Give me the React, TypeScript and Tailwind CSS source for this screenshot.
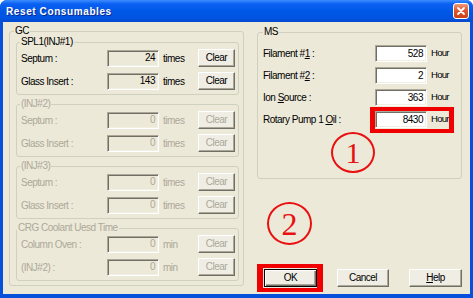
import React from "react";

const sunken =
  "border border-t-[#aca899] border-l-[#aca899] border-b-white border-r-white shadow-[inset_1px_1px_0_#716f64,inset_-1px_-1px_0_#f1efe2]";
const raised =
  "border border-t-white border-l-white border-b-[#716f64] border-r-[#716f64] shadow-[inset_-1px_-1px_0_#aca899] bg-[#efede4]";

function Field({ value, white, disabled, w }: { value: string; white?: boolean; disabled?: boolean; w: string }) {
  return (
    <div
      className={`${w} h-[17px] ${sunken} ${white ? "bg-white" : "bg-[#ece9d8]"} ${
        disabled ? "text-[#aca899]" : "text-black"
      } flex items-center justify-end pr-[3px] leading-[12px]`}
    >
      {value}
    </div>
  );
}

function Btn({ children, disabled, className = "" }: { children: React.ReactNode; disabled?: boolean; className?: string }) {
  return (
    <div
      className={`${raised} ${className} flex items-center justify-center leading-[12px] ${
        disabled ? "text-[#aca899]" : "text-black"
      }`}
    >
      {children}
    </div>
  );
}

function GcRow({ label, value, unit, disabled }: { label: string; value: string; unit: string; disabled?: boolean }) {
  const c = disabled ? "text-[#aca899]" : "text-black";
  return (
    <div className="flex items-center h-[18px]">
      <span className={`w-[86px] ${c}`}>{label}</span>
      <Field w="w-[52px]" value={value} disabled={disabled} />
      <span className={`w-[39px] pl-[4px] ${c}`}>{unit}</span>
      <Btn disabled={disabled} className="w-[37px] h-[18px]">
        Clear
      </Btn>
    </div>
  );
}

function SubGroup({
  label,
  disabled,
  legendMl,
  rows,
}: {
  label: string;
  disabled?: boolean;
  legendMl: string;
  rows: { label: string; value: string; unit: string }[];
}) {
  return (
    <fieldset className="w-[223px] border border-[#d0d0bf] rounded-[3px]">
      <legend className={`${legendMl} px-[1px] leading-[12px] ${disabled ? "text-[#aca899]" : "text-black"}`}>
        {label}
      </legend>
      <div className="mt-[1px] pl-[4px] pb-[4px] flex flex-col gap-[5px]">
        {rows.map((r, i) => (
          <GcRow key={i} label={r.label} value={r.value} unit={r.unit} disabled={disabled} />
        ))}
      </div>
    </fieldset>
  );
}

function MsRow({ label, value }: { label: React.ReactNode; value: string }) {
  return (
    <div className="flex items-center h-[17px]">
      <span className="w-[112px]">{label}</span>
      <Field w="w-[52px]" value={value} white />
      <span className="pl-[4px] text-[9.5px] tracking-[-0.7px]">Hour</span>
    </div>
  );
}

export default function App() {
  return (
    <div className="w-[473px] h-[298px] flex flex-col bg-[#0650dc] rounded-t-[7px] overflow-hidden font-['Liberation_Sans',Arial,sans-serif] text-[10px] tracking-[-0.5px] text-black">
      {/* Title bar */}
      <div className="h-[22px] flex items-center justify-between pl-[6px] pr-[4px] bg-[linear-gradient(to_bottom,#3d8dff_0%,#0a60f2_18%,#0058e8_50%,#0053e0_85%,#0648cc_100%)]">
        <span className="text-white font-bold text-[10px] tracking-[0.6px] [text-shadow:1px_1px_0_#0a2a8c] pt-[1px]">
          Reset Consumables
        </span>
        <div className="w-[16px] h-[16px] rounded-[3px] border border-white bg-[linear-gradient(to_bottom,#f09a7a,#e0572e_45%,#c9401a)] flex items-center justify-center">
          <svg width="10" height="10" viewBox="0 0 10 10">
            <path d="M2 2 L8 8 M8 2 L2 8" stroke="white" strokeWidth="1.8" strokeLinecap="round" />
          </svg>
        </div>
      </div>

      {/* Body */}
      <div className="flex-1 mx-[3px] mb-[4px] bg-[#ece9d8] relative flex items-start">
        {/* GC */}
        <fieldset className="w-[235px] ml-[6px] mt-[3px] border border-[#d0d0bf] rounded-[3px]">
          <legend className="ml-[4px] px-[1px] leading-[12px]">GC</legend>
          <div className="-mt-px pl-[6px] pr-[4px] pb-[4px] flex flex-col gap-[3px]">
            <SubGroup
              label="SPL1(INJ#1)"
              legendMl="ml-[3px]"
              rows={[
                { label: "Septum :", value: "24", unit: "times" },
                { label: "Glass Insert :", value: "143", unit: "times" },
              ]}
            />
            <SubGroup
              label="(INJ#2)"
              disabled
              legendMl="ml-[3px]"
              rows={[
                { label: "Septum :", value: "0", unit: "times" },
                { label: "Glass Insert :", value: "0", unit: "times" },
              ]}
            />
            <SubGroup
              label="(INJ#3)"
              disabled
              legendMl="ml-[3px]"
              rows={[
                { label: "Septum :", value: "0", unit: "times" },
                { label: "Glass Insert :", value: "0", unit: "times" },
              ]}
            />
            <SubGroup
              label="CRG Coolant Uesd Time"
              disabled
              legendMl="ml-0"
              rows={[
                { label: "Column Oven :", value: "0", unit: "min" },
                { label: "(INJ#2) :", value: "0", unit: "min" },
              ]}
            />
          </div>
        </fieldset>

        {/* Right column */}
        <div className="ml-[13px] mt-[4px] flex flex-col">
          <fieldset className="w-[205px] h-[153px] border border-[#d0d0bf] rounded-[3px]">
            <legend className="ml-[5px] px-[1px] leading-[12px]">MS</legend>
            <div className="mt-[7px] pl-[5px] flex flex-col gap-[5px]">
              <MsRow
                label={
                  <>
                    Filament #<u>1</u> :
                  </>
                }
                value="528"
              />
              <MsRow
                label={
                  <>
                    Filament #<u>2</u> :
                  </>
                }
                value="2"
              />
              <MsRow
                label={
                  <>
                    Ion <u>S</u>ource :
                  </>
                }
                value="363"
              />
              <MsRow
                label={
                  <>
                    Rotary Pump 1 <u>O</u>il :
                  </>
                }
                value="8430"
              />
            </div>
          </fieldset>
          <div className="mt-[90px] ml-[7px] flex">
            <div className="w-[53px] h-[18px] border border-black shadow-[inset_1px_1px_0_#fff,inset_-1px_-1px_0_#716f64,inset_-2px_-2px_0_#aca899] bg-[#efede4] flex items-center justify-center leading-[12px]">
              OK
            </div>
            <Btn className="ml-[20px] w-[52px] h-[18px]">Cancel</Btn>
            <Btn className="ml-[20px] w-[53px] h-[18px]">
              <span>
                <u>H</u>elp
              </span>
            </Btn>
          </div>
        </div>

        {/* Annotations */}
        <div className="absolute left-[367px] top-[85px] w-[84px] h-[26px] border-x-[5px] border-y-[4px] border-[#f00000]" />
        <div className="absolute left-[254px] top-[242px] w-[66px] h-[28px] border-x-[6px] border-y-[4px] border-[#f00000]" />
        <div className="absolute left-[328px] top-[110px] w-[44px] h-[41px] rounded-[50%] border-2 border-[#e81010] flex items-center justify-center font-['Liberation_Serif',serif] text-[30px] leading-none text-[#e81010] tracking-normal">
          1
        </div>
        <div className="absolute left-[264px] top-[180px] w-[45px] h-[43px] rounded-[50%] border-2 border-[#e81010] flex items-center justify-center font-['Liberation_Serif',serif] text-[32px] leading-none text-[#e81010] tracking-normal">
          2
        </div>
      </div>
    </div>
  );
}
